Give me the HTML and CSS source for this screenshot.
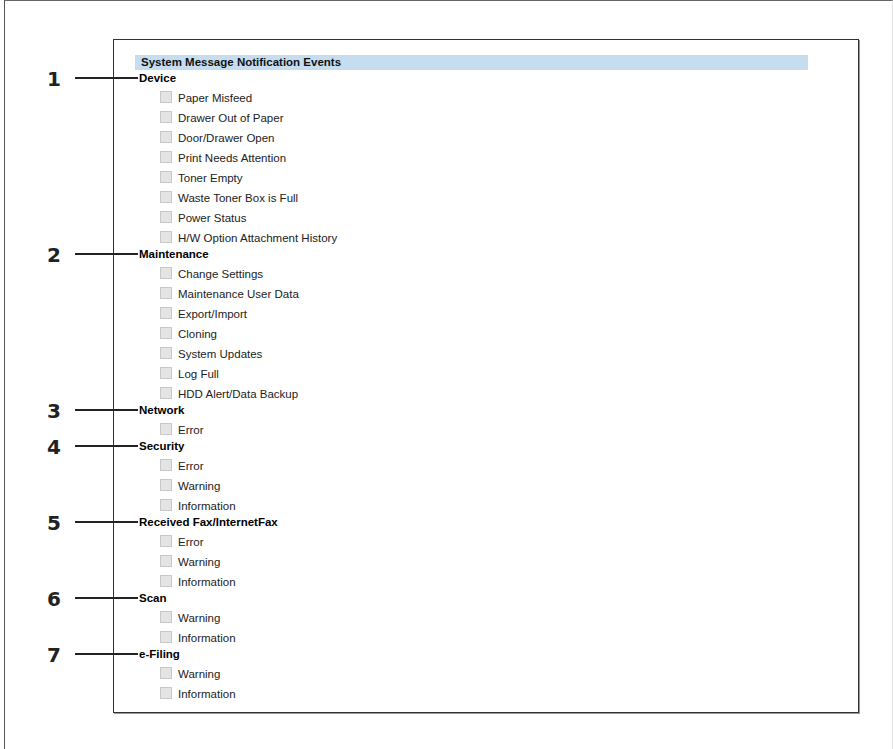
FILE: index.html
```html
<!DOCTYPE html>
<html lang="en">
<head>
  <meta charset="utf-8">
  <title>System Message Notification Events</title>
  <link rel="stylesheet" href="styles.css">
</head>
<body>

  <div class="page">
    <div class="panel">
      <div class="panel-title">System Message Notification Events</div>

      <section class="group">
        <h3 class="group-title"><span class="callout"><b>1</b><i></i></span>Device</h3>
        <ul class="options">
          <li><label><input type="checkbox" disabled>Paper Misfeed</label></li>
          <li><label><input type="checkbox" disabled>Drawer Out of Paper</label></li>
          <li><label><input type="checkbox" disabled>Door/Drawer Open</label></li>
          <li><label><input type="checkbox" disabled>Print Needs Attention</label></li>
          <li><label><input type="checkbox" disabled>Toner Empty</label></li>
          <li><label><input type="checkbox" disabled>Waste Toner Box is Full</label></li>
          <li><label><input type="checkbox" disabled>Power Status</label></li>
          <li><label><input type="checkbox" disabled>H/W Option Attachment History</label></li>
        </ul>
      </section>

      <section class="group">
        <h3 class="group-title"><span class="callout"><b>2</b><i></i></span>Maintenance</h3>
        <ul class="options">
          <li><label><input type="checkbox" disabled>Change Settings</label></li>
          <li><label><input type="checkbox" disabled>Maintenance User Data</label></li>
          <li><label><input type="checkbox" disabled>Export/Import</label></li>
          <li><label><input type="checkbox" disabled>Cloning</label></li>
          <li><label><input type="checkbox" disabled>System Updates</label></li>
          <li><label><input type="checkbox" disabled>Log Full</label></li>
          <li><label><input type="checkbox" disabled>HDD Alert/Data Backup</label></li>
        </ul>
      </section>

      <section class="group">
        <h3 class="group-title"><span class="callout"><b>3</b><i></i></span>Network</h3>
        <ul class="options">
          <li><label><input type="checkbox" disabled>Error</label></li>
        </ul>
      </section>

      <section class="group">
        <h3 class="group-title"><span class="callout"><b>4</b><i></i></span>Security</h3>
        <ul class="options">
          <li><label><input type="checkbox" disabled>Error</label></li>
          <li><label><input type="checkbox" disabled>Warning</label></li>
          <li><label><input type="checkbox" disabled>Information</label></li>
        </ul>
      </section>

      <section class="group">
        <h3 class="group-title"><span class="callout"><b>5</b><i></i></span>Received Fax/InternetFax</h3>
        <ul class="options">
          <li><label><input type="checkbox" disabled>Error</label></li>
          <li><label><input type="checkbox" disabled>Warning</label></li>
          <li><label><input type="checkbox" disabled>Information</label></li>
        </ul>
      </section>

      <section class="group">
        <h3 class="group-title"><span class="callout"><b>6</b><i></i></span>Scan</h3>
        <ul class="options">
          <li><label><input type="checkbox" disabled>Warning</label></li>
          <li><label><input type="checkbox" disabled>Information</label></li>
        </ul>
      </section>

      <section class="group">
        <h3 class="group-title"><span class="callout"><b>7</b><i></i></span>e-Filing</h3>
        <ul class="options">
          <li><label><input type="checkbox" disabled>Warning</label></li>
          <li><label><input type="checkbox" disabled>Information</label></li>
        </ul>
      </section>
    </div>
  </div>

</body>
</html>
```

FILE: styles.css
```css
* {
  margin: 0;
  padding: 0;
  box-sizing: border-box;
}

html {
  font-family: "Liberation Sans", Arial, sans-serif;
  font-size: 11.5px;
  line-height: 16px;
}

body {
  background: #fff;
  color: #222;
  overflow: hidden;
}

.page {
  margin-left: 4px;
  width: 889px;
  height: 749px;
  border-left: 1px solid #555;
  border-top: 1px solid #666;
  border-right: 1px solid #e2e2e2;
  padding: 38px 0 0 108px;
}

.panel {
  width: 746px;
  height: 674px;
  border: 1px solid #333;
  box-shadow: 1px 1px 0 #999;
  padding: 15px 50px 0 21px;
}

.panel-title {
  height: 15px;
  line-height: 15px;
  padding-left: 6px;
  background: #c6ddef;
  font-weight: 700;
  color: #111;
}

.group-title {
  position: relative;
  height: 16px;
  padding-left: 4px;
  font-size: inherit;
  font-weight: 700;
  color: #000;
}

/* numbered callout sits over the panel border */
.callout {
  position: absolute;
  right: calc(100% - 3px);
  top: 0;
  height: 16px;
  display: flex;
  align-items: center;
  gap: 14px;
}
.callout b {
  font-family: "DejaVu Sans", sans-serif;
  font-size: 20px;
  font-weight: 700;
  color: #222;
  line-height: 16px;
  margin-top: 1px;
}
.callout i {
  display: block;
  width: 63px;
  height: 2px;
  background: #222;
}

.options {
  list-style: none;
  padding-left: 25px;
}
.options li {
  height: 20px;
  padding-top: 4px;
}
.options label {
  display: flex;
  align-items: center;
  gap: 6px;
  height: 16px;
}
.options input {
  appearance: none;
  width: 12px;
  height: 12px;
  margin-top: -2px;
  background: #e4e4e4;
  border: 1px solid #c8c8c8;
}
```
